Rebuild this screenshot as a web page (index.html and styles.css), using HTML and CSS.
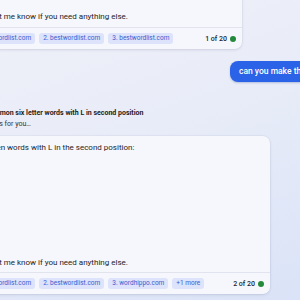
FILE: index.html
```html
<!DOCTYPE html>
<html lang="en">
<head>
<meta charset="utf-8">
<title>Chat</title>
<link rel="stylesheet" href="styles.css">
</head>
<body>
<main class="chat">
  <section class="bot">
    <article class="card card-narrow">
      <div class="card-body">
        <p>I hope this list helps you find the word you are looking for.</p>
        <p>Please let me know if you need anything else.</p>
      </div>
      <footer class="card-foot">
        <span class="chip">1. bestwordlist.com</span>
        <span class="chip">2. bestwordlist.com</span>
        <span class="chip">3. bestwordlist.com</span>
        <span class="count">1 of 20 <i class="dot"></i></span>
      </footer>
    </article>
  </section>

  <section class="user-row">
    <div class="bubble">can you make them in a table?</div>
  </section>

  <section class="status">
    <div class="status-line">
      <svg class="check" viewBox="0 0 10 10" width="8" height="8"><path d="M2 5.2l2 2 4-4.4" fill="none" stroke="#1a7f37" stroke-width="1.4" stroke-linecap="round" stroke-linejoin="round"/></svg>
      <span>Searching for: <b>common six letter words with L in second position</b></span>
    </div>
    <div class="status-line muted">
      <svg class="check" viewBox="0 0 10 10" width="8" height="8"><path d="M2 5.2l2 2 4-4.4" fill="none" stroke="#1a7f37" stroke-width="1.4" stroke-linecap="round" stroke-linejoin="round"/></svg>
      <span>Generating answers for you…</span>
    </div>
  </section>

  <section class="bot">
    <article class="card card-wide">
      <div class="card-body">
        <p>I found ten words with L in the second position:</p>
        <div class="table-area"></div>
        <p>Please let me know if you need anything else.</p>
      </div>
      <footer class="card-foot">
        <span class="chip">1. bestwordlist.com</span>
        <span class="chip">2. bestwordlist.com</span>
        <span class="chip">3. wordhippo.com</span>
        <span class="chip">+1 more</span>
        <span class="count">2 of 20 <i class="dot"></i></span>
      </footer>
    </article>
  </section>
</main>
</body>
</html>
```

FILE: styles.css
```css
html, body {
  margin: 0;
  padding: 0;
  width: 300px;
  height: 300px;
  overflow: hidden;
}

body {
  font-family: Roboto, "Noto Sans", "Liberation Sans", sans-serif;
  color: #1d1d1f;
  background: linear-gradient(160deg, #f0f1f8 0%, #e8ecf8 45%, #dae3f7 100%);
}

.chat {
  margin: -19px 0 0 -70px;
  display: flex;
  flex-direction: column;
}

.bot {
  padding-left: 30px;
}

.card {
  background: #f6f7fd;
  border-radius: 7px;
  box-shadow: 0 1px 3px rgba(40, 50, 90, 0.12), 0 0 0 0.5px rgba(40, 50, 90, 0.06);
}

.card-narrow { width: 282px; }
.card-wide { width: 310px; margin-top: 7px; }

.card-body {
  padding: 8px 10px 4px 7px;
  display: flex;
  flex-direction: column;
  gap: 10px;
  font-size: 8px;
  line-height: 12px;
}

.card-wide .card-body {
  padding: 6px 10px 3px 7px;
}

.card-body p {
  margin: 0;
  white-space: nowrap;
}

.table-area {
  height: 83px;
}

.card-foot {
  border-top: 1px solid #e1e4ee;
  padding: 5px 6px 5px 10px;
  display: flex;
  align-items: center;
  gap: 4px;
}

.chip {
  height: 11px;
  line-height: 11px;
  padding: 0 4px;
  border-radius: 3px;
  background: #dce3fb;
  color: #3d5bd0;
  font-size: 6.5px;
  white-space: nowrap;
}

.count {
  margin-left: auto;
  display: flex;
  align-items: center;
  gap: 3px;
  font-size: 7px;
  font-weight: 500;
  color: #1d1d1f;
  white-space: nowrap;
}

.dot {
  display: block;
  width: 6px;
  height: 6px;
  border-radius: 50%;
  background: #238a3b;
}

.user-row {
  margin-top: 12px;
  padding-left: 300px;
  display: flex;
}

.bubble {
  height: 21px;
  line-height: 21px;
  padding: 0 9px;
  border-radius: 8px;
  background: #2a62e8;
  color: #ffffff;
  font-size: 8.5px;
  font-weight: 500;
  white-space: nowrap;
  box-shadow: 0 1px 2px rgba(20, 50, 140, 0.25);
}

.status {
  margin-top: 25px;
  display: flex;
  flex-direction: column;
}

.status-line {
  display: flex;
  align-items: center;
  gap: 3px;
  height: 11px;
  font-size: 7px;
  white-space: nowrap;
}

.status-line b {
  font-weight: 700;
}

.status-line.muted {
  color: #333;
}

.check {
  flex: none;
}
```
